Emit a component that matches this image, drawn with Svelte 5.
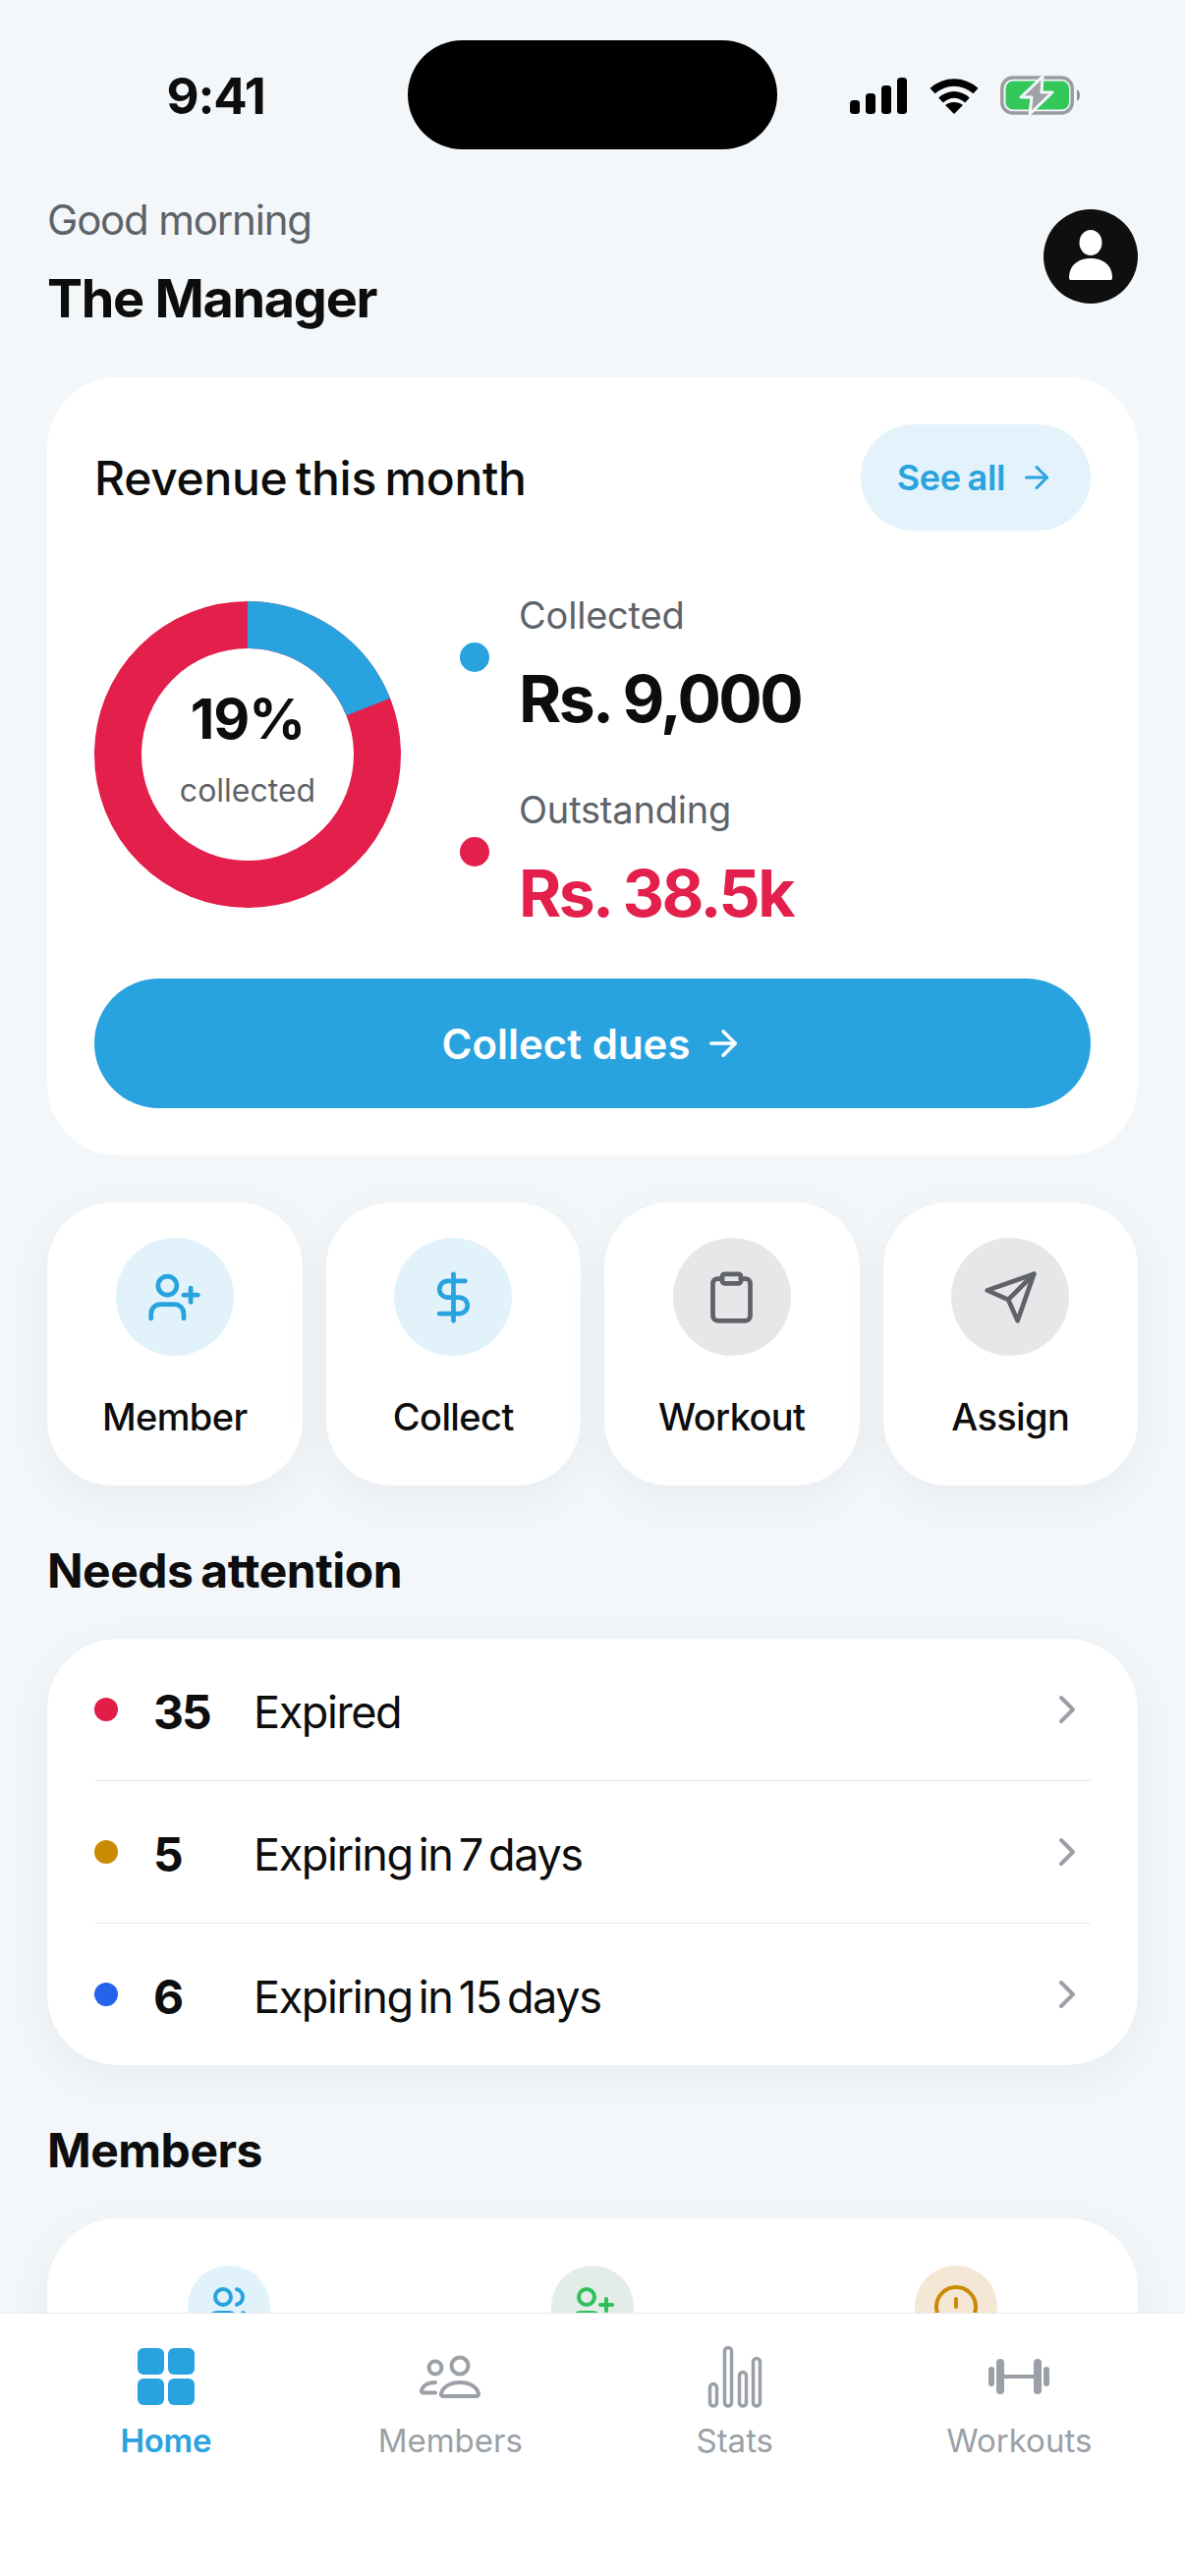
<script lang="ts">
  const collectedPct = 19;
  const radius = 132;
  const circ = 2 * Math.PI * radius;

  const actions = [
    { label: 'Member', kind: 'blue', icon: 'userPlus' },
    { label: 'Collect', kind: 'blue', icon: 'dollar' },
    { label: 'Workout', kind: 'grey', icon: 'clipboard' },
    { label: 'Assign', kind: 'grey', icon: 'send' },
  ];

  const alerts = [
    { n: 35, label: 'Expired', color: '#e11d48' },
    { n: 5, label: 'Expiring in 7 days', color: '#ca8a04' },
    { n: 6, label: 'Expiring in 15 days', color: '#2563eb' },
  ];
</script>

{#snippet arrow(size: number)}
  <svg width={size} height={size} viewBox="0 0 24 24" fill="none" stroke="currentColor" stroke-width="2" stroke-linecap="round" stroke-linejoin="round">
    <path d="M5 12h14" /><path d="m12 5 7 7-7 7" />
  </svg>
{/snippet}

{#snippet userPlus(size: number)}
  <svg width={size} height={size} viewBox="0 0 24 24" fill="none" stroke="currentColor" stroke-width="2" stroke-linecap="round" stroke-linejoin="round">
    <path d="M16 21v-2a4 4 0 0 0-4-4H6a4 4 0 0 0-4 4v2" />
    <circle cx="9" cy="7" r="4" />
    <path d="M19 8v6" /><path d="M22 11h-6" />
  </svg>
{/snippet}

<div class="phone">
  <div class="scroll">
    <!-- Status bar -->
    <div class="status">
      <div class="time">9:41</div>
      <div class="island"></div>
      <div class="sys">
        <svg width="58" height="37" viewBox="0 0 58 37" fill="#000">
          <rect x="0" y="23" width="10" height="14" rx="3.5" />
          <rect x="16" y="16" width="10" height="21" rx="3.5" />
          <rect x="32" y="8" width="10" height="29" rx="3.5" />
          <rect x="48" y="0" width="10" height="37" rx="3.5" />
        </svg>
        <svg width="50" height="37" viewBox="0 0 50 37" fill="none" stroke="#000">
          <path d="M3 13.5C16 2 34 2 47 13.5" stroke-width="7.5" />
          <path d="M11.5 23C20 15.5 30 15.5 38.5 23" stroke-width="7" />
          <path d="M25 37 16 28C21 24 29 24 34 28Z" fill="#000" stroke="none" />
        </svg>
        <svg width="82" height="40" viewBox="0 0 82 40">
          <rect x="1.75" y="2" width="71.5" height="36" rx="11" fill="none" stroke="#9a9ca1" stroke-width="3.5" />
          <rect x="5.5" y="5.5" width="64.5" height="29" rx="7.5" fill="#34c759" />
          <path d="M78 14c2 1 3 3.500 3 6s-1 5-3 6z" fill="#8e9095" />
          <path d="M43 1 21 22H32L30 39 53 17H42Z" fill="#a0a2a6" stroke="#f3f7fa" stroke-width="3" stroke-linejoin="round" />
        </svg>
      </div>
    </div>

    <!-- Greeting -->
    <header class="hello">
      <div>
        <div class="greet">Good morning</div>
        <div class="name">The Manager</div>
      </div>
      <div class="avatar">
        <svg width="60" height="60" viewBox="0 0 60 60" fill="#fff">
          <ellipse cx="30" cy="16" rx="11.500" ry="13" />
          <path d="M8 52c0-13 9-20 22-20s22 7 22 20c0 1.500-1 2-2 2H10c-1 0-2-.5-2-2z" />
        </svg>
      </div>
    </header>

    <!-- Revenue -->
    <section class="card revenue">
      <div class="rev-head">
        <h2>Revenue this month</h2>
        <div class="see-all">See all {@render arrow(36)}</div>
      </div>

      <div class="rev-body">
        <div class="donut">
          <svg width="312" height="312" viewBox="0 0 312 312" fill="none">
            <circle cx="156" cy="156" r={radius} stroke="#e31f4b" stroke-width="48" />
            <circle
              cx="156" cy="156" r={radius}
              stroke="#29a3df" stroke-width="48"
              stroke-dasharray="{circ * collectedPct / 100} {circ}"
              transform="rotate(-90 156 156)"
            />
          </svg>
          <div class="donut-text">
            <div class="pct">{collectedPct}%</div>
            <div class="pct-sub">collected</div>
          </div>
        </div>

        <div class="legend">
          <div class="leg-item">
            <span class="leg-dot blue"></span>
            <div>
              <div class="leg-label">Collected</div>
              <div class="leg-value">Rs. 9,000</div>
            </div>
          </div>
          <div class="leg-item">
            <span class="leg-dot red"></span>
            <div>
              <div class="leg-label">Outstanding</div>
              <div class="leg-value red-text">Rs. 38.5k</div>
            </div>
          </div>
        </div>
      </div>

      <button class="collect">Collect dues {@render arrow(42)}</button>
    </section>

    <!-- Quick actions -->
    <div class="actions">
      {#each actions as a}
        <div class="action">
          <div class="action-icon {a.kind}">
            {#if a.icon === 'userPlus'}
              {@render userPlus(57)}
            {:else}
              <svg width="57" height="57" viewBox="0 0 24 24" fill="none" stroke="currentColor" stroke-width="2" stroke-linecap="round" stroke-linejoin="round">
                {#if a.icon === 'dollar'}
                  <path d="M12 2v20" />
                  <path d="M17 5H9.500a3.500 3.500 0 0 0 0 7h5a3.500 3.500 0 0 1 0 7H6" />
                {:else if a.icon === 'clipboard'}
                  <rect x="8" y="2" width="8" height="4" rx="1" />
                  <path d="M16 4h2a2 2 0 0 1 2 2v14a2 2 0 0 1-2 2H6a2 2 0 0 1-2-2V6a2 2 0 0 1 2-2h2" />
                {:else}
                  <path d="M22 2 11 13" />
                  <path d="M22 2 15 22 11 13 2 9Z" />
                {/if}
              </svg>
            {/if}
          </div>
          <div class="action-label">{a.label}</div>
        </div>
      {/each}
    </div>

    <!-- Needs attention -->
    <h3 class="section-title">Needs attention</h3>
    <section class="card list">
      {#each alerts as row}
        <div class="row">
          <span class="row-dot" style:background={row.color}></span>
          <span class="row-num">{row.n}</span>
          <span class="row-label">{row.label}</span>
          <svg class="chev" width="48" height="48" viewBox="0 0 24 24" fill="none" stroke="currentColor" stroke-width="2" stroke-linecap="round" stroke-linejoin="round">
            <path d="m9 18 6-6-6-6" />
          </svg>
        </div>
      {/each}
    </section>

    <!-- Members -->
    <h3 class="section-title">Members</h3>
    <section class="card members">
      <div class="stat">
        <div class="stat-icon s-blue">
          <svg width="48" height="48" viewBox="0 0 24 24" fill="none" stroke="currentColor" stroke-width="2" stroke-linecap="round" stroke-linejoin="round">
            <path d="M16 21v-2a4 4 0 0 0-4-4H6a4 4 0 0 0-4 4v2" />
            <circle cx="9" cy="7" r="4" />
            <path d="M22 21v-2a4 4 0 0 0-3-3.870" />
            <path d="M16 3.130a4 4 0 0 1 0 7.750" />
          </svg>
        </div>
      </div>
      <div class="stat">
        <div class="stat-icon s-green">{@render userPlus(48)}</div>
      </div>
      <div class="stat">
        <div class="stat-icon s-amber">
          <svg width="48" height="48" viewBox="0 0 24 24" fill="none" stroke="currentColor" stroke-width="2" stroke-linecap="round" stroke-linejoin="round">
            <circle cx="12" cy="12" r="10" />
            <path d="M12 8v4" /><path d="M12 16h.01" />
          </svg>
        </div>
      </div>
    </section>
  </div>

  <!-- Tab bar -->
  <nav class="tabs">
    <div class="tab active">
      <svg width="72" height="72" viewBox="0 0 72 72" fill="currentColor">
        <rect x="7" y="7" width="27" height="27" rx="6" />
        <rect x="38" y="7" width="27" height="27" rx="6" />
        <rect x="7" y="38" width="27" height="27" rx="6" />
        <rect x="38" y="38" width="27" height="27" rx="6" />
      </svg>
      <span>Home</span>
    </div>
    <div class="tab">
      <svg width="72" height="72" viewBox="0 0 72 72" fill="none" stroke="currentColor" stroke-width="4" stroke-linecap="round" stroke-linejoin="round">
        <circle cx="21" cy="27" r="6.500" />
        <circle cx="46" cy="25" r="8.500" />
        <path d="M29 56h34c1.500 0 2.500-1 2-2.500C63.500 46.500 56 42 46 42s-17.500 4.500-19 11.500c-.5 1.500.5 2.500 2 2.500z" />
        <path d="M21 42C13 42 8 45.500 7 50.500c-.3 1.500.5 2 2 2h12" />
      </svg>
      <span>Members</span>
    </div>
    <div class="tab">
      <svg width="72" height="72" viewBox="0 0 72 72" fill="none" stroke="currentColor" stroke-width="3.500">
        <rect x="10.500" y="43.500" width="7" height="22.500" rx="3.500" />
        <rect x="25.500" y="6.500" width="7" height="59.500" rx="3.500" />
        <rect x="40.500" y="31.500" width="7" height="34.500" rx="3.500" />
        <rect x="54.500" y="17.500" width="7" height="48.500" rx="3.500" />
      </svg>
      <span>Stats</span>
    </div>
    <div class="tab">
      <svg width="72" height="72" viewBox="0 0 72 72" fill="currentColor">
        <rect x="5" y="26" width="6" height="20" rx="3" />
        <rect x="13" y="18" width="8" height="36" rx="4" />
        <rect x="21" y="34" width="30" height="4" />
        <rect x="51" y="18" width="8" height="36" rx="4" />
        <rect x="61" y="26" width="6" height="20" rx="3" />
      </svg>
      <span>Workouts</span>
    </div>
  </nav>
</div>

<style>
  :global(body) { margin: 0; background: #f3f7fa; }

  .phone {
    width: 1206px; height: 2622px;
    display: flex; flex-direction: column;
    overflow: hidden;
    background: #f3f7fa;
    color: #0d0d0d;
    font-family: Inter, "Liberation Sans", sans-serif;
  }
  .scroll { flex: 1; min-height: 0; overflow: hidden; padding-top: 41px; }

  /* Status bar */
  .status { display: grid; grid-template-columns: 415px 376px 1fr; height: 111px; align-items: center; }
  .time { font-size: 51px; font-weight: 700; text-align: center; padding-left: 24px; margin-top: 1px; letter-spacing: -1.2px; }
  .island { height: 111px; border-radius: 56px; background: #000; }
  .sys { display: flex; align-items: center; gap: 23px; padding-left: 74px; margin-top: 1px; }
  .sys svg:nth-child(3) { margin-left: -1px; }

  /* Greeting */
  .hello {
    display: flex; justify-content: space-between; align-items: center;
    padding: 39px 48px 0;
    margin-bottom: 47px;
  }
  .greet { font-size: 42px; line-height: 66px; color: #5f6368; letter-spacing: -1.2px; }
  .name { font-size: 54px; line-height: 66px; font-weight: 700; margin-top: 14px; letter-spacing: -1.3px; }
  .avatar {
    width: 96px; height: 96px; border-radius: 50%;
    background: #0f0f0f;
    display: flex; align-items: center; justify-content: center;
    margin-bottom: 6px;
  }

  /* Cards */
  .card { background: #fff; border-radius: 72px; margin: 0 48px; }

  .revenue { padding: 48px; }
  .rev-head { display: flex; justify-content: space-between; align-items: center; }
  .rev-head h2 { margin: 0; font-size: 48px; font-weight: 500; letter-spacing: -0.3px; word-spacing: -4px; }
  .see-all {
    height: 108px; width: 234px; box-sizing: border-box;
    border-radius: 54px;
    background: #e3f2fb; color: #29a3df;
    display: flex; align-items: center; justify-content: center; gap: 14px;
    font-size: 36px; font-weight: 600; letter-spacing: -0.3px; word-spacing: -2px;
  }

  .rev-body { display: flex; align-items: center; gap: 60px; height: 312px; margin: 72px 0; }
  .donut { position: relative; width: 312px; height: 312px; flex: none; }
  .donut svg { display: block; }
  .donut-text {
    position: absolute; inset: 0;
    display: flex; flex-direction: column; align-items: center; justify-content: center;
  }
  .pct { font-size: 57px; line-height: 66px; font-weight: 700; letter-spacing: -1px; margin-top: -12px; }
  .pct-sub { font-size: 32px; line-height: 42px; color: #5f6368; margin-top: 19px; }

  .legend { display: flex; flex-direction: column; gap: 53px; margin-top: 5px; }
  .leg-item { display: flex; align-items: center; gap: 30px; }
  .leg-dot { width: 30px; height: 30px; border-radius: 50%; flex: none; margin-bottom: 5px; }
  .blue { background: #29a3df; }
  .red { background: #e31f4b; }
  .leg-label { font-size: 38px; line-height: 54px; color: #5f6368; letter-spacing: -0.2px; }
  .leg-value { font-size: 66px; line-height: 66px; font-weight: 700; margin-top: 25px; letter-spacing: -2.6px; }
  .red-text { color: #e31f4b; }

  .collect {
    display: flex; align-items: center; justify-content: center; gap: 12px;
    width: 100%; height: 132px;
    border: 0; border-radius: 66px;
    background: #29a3df; color: #fff;
    font: inherit; font-size: 42px; font-weight: 600; letter-spacing: 0;
  }

  /* Quick actions */
  .actions { display: grid; grid-template-columns: repeat(4, 1fr); gap: 24px; margin: 48px 48px 0; }
  .action {
    height: 288px; box-sizing: border-box;
    padding-top: 36px;
    background: #fff; border-radius: 66px;
    box-shadow: 0 12px 48px rgba(15, 23, 42, 0.05);
    display: flex; flex-direction: column; align-items: center;
  }
  .action-icon {
    width: 120px; height: 120px; border-radius: 50%;
    display: flex; align-items: center; justify-content: center;
  }
  .action-icon.blue { background: #e2f2fb; color: #29a3df; }
  .action-icon.grey { background: #e7e7e9; color: #5f6368; }
  .action-label { font-size: 38px; line-height: 48px; font-weight: 500; margin-top: 38px; letter-spacing: -0.6px; }

  /* Sections */
  .section-title { margin: 57px 48px 39px; font-size: 48px; line-height: 60px; font-weight: 700; letter-spacing: -0.5px; word-spacing: -3px; }

  .list { box-shadow: 0 12px 48px rgba(15, 23, 42, 0.05); }
  .row {
    display: flex; align-items: center;
    height: 145px; box-sizing: border-box;
    margin: 0 48px;
    border-bottom: 1px solid #e8e8ea;
  }
  .row:last-child { height: 144px; border-bottom: 0; }
  .row-dot { width: 24px; height: 24px; border-radius: 50%; flex: none; }
  .row-num { width: 102px; margin-left: 36px; font-size: 48px; font-weight: 700; letter-spacing: -2px; margin-top: 4px; }
  .row-label { flex: 1; font-size: 45px; letter-spacing: -1.4px; word-spacing: -5px; margin-top: 4px; }
  .chev { color: #9aa0a6; }

  .members {
    display: grid; grid-template-columns: repeat(3, 1fr);
    padding-top: 48px; height: 300px;
    box-shadow: 0 12px 48px rgba(15, 23, 42, 0.05);
  }
  .stat { display: flex; justify-content: center; }
  .stat-icon {
    width: 84px; height: 84px; border-radius: 50%;
    display: flex; align-items: center; justify-content: center;
  }
  .s-blue { background: #e2f2fb; color: #29a3df; }
  .s-green { background: #e3ede8; color: #2fbf5b; }
  .s-amber { background: #f5e7d6; color: #ca8a04; }

  /* Tab bar */
  .tabs {
    height: 268px; box-sizing: border-box; flex: none;
    display: grid; grid-template-columns: repeat(4, 1fr);
    padding: 28px 24px 0;
    background: #fff;
    border-top: 1px solid #e9ebee;
    color: #9aa0a6;
  }
  .tab { display: flex; flex-direction: column; align-items: center; font-size: 33px; line-height: 42px; letter-spacing: 0; }
  .tab span { margin-top: 8px; }
  .tab.active { color: #29a3df; font-weight: 600; letter-spacing: -0.3px; }
</style>
